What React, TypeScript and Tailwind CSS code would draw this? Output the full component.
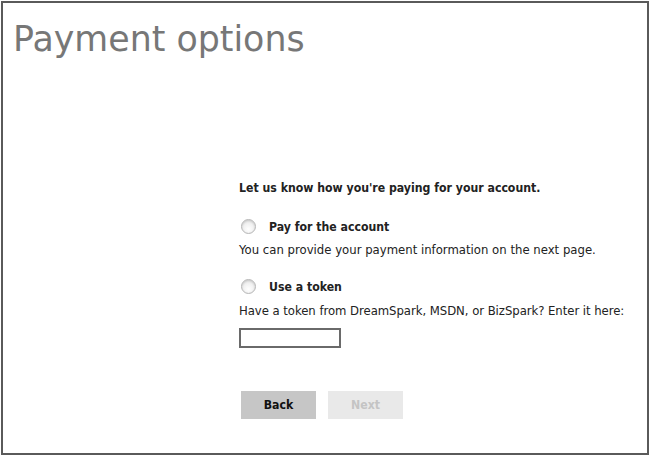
import React from 'react';

function Radio() {
  return (
    <span className="w-[15px] h-[15px] rounded-full border border-[#b5b5b5] bg-[radial-gradient(circle_at_50%_70%,#ffffff,#e3e3e3)] shadow-[inset_0_1px_2px_rgba(0,0,0,0.15)] shrink-0" />
  );
}

const bold = "font-bold font-['DejaVu_Sans_Condensed','DejaVu_Sans',sans-serif]";

export default function App() {
  return (
    <div className="w-[650px] h-[457px] p-px bg-white font-['DejaVu_Sans',sans-serif]">
      <div className="w-[648px] h-[454px] border-2 border-[#5a5a5a] flex flex-col">
        <h1 className="text-[34.8px] leading-none text-[#777777] pl-[10px] pt-[19px]">
          Payment options
        </h1>
        <div className="pl-[236px] pt-[123px] text-[11.7px] text-[#222] flex flex-col">
          <p className={`${bold} text-[12.2px] leading-[16px]`}>Let us know how you're paying for your account.</p>
          <label className="flex items-center gap-[13px] mt-[23px] pl-[2px]">
            <Radio />
            <span className={`${bold} text-[12.2px] leading-[16px]`}>Pay for the account</span>
          </label>
          <p className="mt-[7px] leading-[16px]">You can provide your payment information on the next page.</p>
          <label className="flex items-center gap-[13px] mt-[21px] pl-[2px]">
            <Radio />
            <span className={`${bold} text-[12.2px] leading-[16px]`}>Use a token</span>
          </label>
          <p className="mt-[8px] leading-[16px] tracking-[-0.05px]">Have a token from DreamSpark, MSDN, or BizSpark? Enter it here:</p>
          <input className="mt-[9px] w-[102px] h-[20px] border-2 border-[#6a6a6a] bg-white outline-none" />
          <div className="flex gap-[12px] mt-[43px] pl-[2px]">
            <button className={`${bold} w-[75px] h-[28px] bg-[#c6c6c6] text-[#111] text-[12.2px]`}>Back</button>
            <button className={`${bold} w-[75px] h-[28px] bg-[#e9e9e9] text-[#c4c4c4] text-[12.2px]`}>Next</button>
          </div>
        </div>
      </div>
    </div>
  );
}
